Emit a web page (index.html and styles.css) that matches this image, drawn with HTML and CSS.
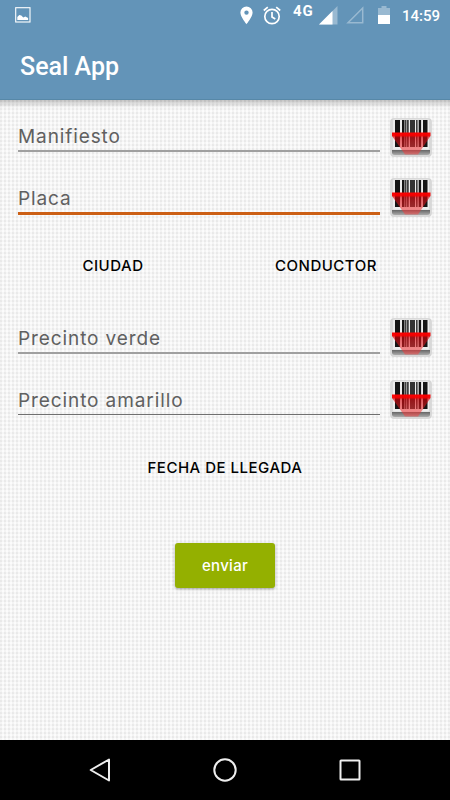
FILE: index.html
```html
<!DOCTYPE html>
<html lang="es">
<head>
    <meta charset="UTF-8">
    <meta name="viewport" content="width=device-width, initial-scale=1.0">
    <title>Seal App</title>
    <link rel="stylesheet" href="styles.css">
</head>
<body>
    <!-- shared barcode scanner icon -->
    <svg class="defs" width="0" height="0">
        <defs>
            <linearGradient id="laser" x1="0" y1="0" x2="0" y2="1">
                <stop offset="0" stop-color="#ff0000"/>
                <stop offset="0.14" stop-color="#f60000" stop-opacity="0.95"/>
                <stop offset="0.24" stop-color="#d80008" stop-opacity="0.6"/>
                <stop offset="1" stop-color="#ff4040" stop-opacity="0.5"/>
            </linearGradient>
            <linearGradient id="base" x1="0" y1="0" x2="0" y2="1">
                <stop offset="0" stop-color="#666"/>
                <stop offset="1" stop-color="#aaa"/>
            </linearGradient>
            <symbol id="scanner" viewBox="0 0 42 39">
                <rect x="0.500" y="0.500" width="41" height="38" rx="3" fill="#d8d8d8" stroke="#d0d0d0" stroke-opacity="0.6"/>
                <rect x="3" y="1.500" width="36" height="30" rx="1" fill="#ededed"/>
                <path d="M2 32h38v2.500q0 2.500-3 2.500H5q-3 0-3-2.500z" fill="url(#base)"/>
                <g fill="#151515">
                    <rect x="5" y="2" width="5" height="27"/>
                    <rect x="12" y="2" width="2.500" height="27"/>
                    <rect x="15.200" y="2" width="1.200" height="27"/>
                    <rect x="17.200" y="2" width="1.400" height="27"/>
                    <rect x="20" y="2" width="5" height="27" fill="#333"/>
                    <rect x="26.200" y="2" width="1.300" height="27"/>
                    <rect x="28.700" y="2" width="2.400" height="27"/>
                    <rect x="33" y="2" width="4.500" height="27"/>
                </g>
                <path d="M2 14.500h38.500V18L28 36.500H15L2 18z" fill="url(#laser)"/>
            </symbol>
        </defs>
    </svg>

    <header class="header">
        <div class="status-bar">
            <svg class="picture-icon" width="16" height="16" viewBox="0 0 16 16">
                <rect x="0.700" y="0.700" width="14.300" height="14.300" fill="none" stroke="#fff" stroke-width="1.100"/>
                <path d="M2.300 13V10l2-2 2 .5 2 2 2-1 2.800 1.500v2z" fill="#fff"/>
            </svg>
            <svg class="pin-icon" width="13" height="19" viewBox="0 0 13 19">
                <path d="M6.500 0.500A6.100 6.100 0 0 0 .4 6.600C.4 11 6.500 18.200 6.500 18.200S12.600 11 12.600 6.600A6.100 6.100 0 0 0 6.500 .5zm0 3.900a2.200 2.200 0 1 1 0 4.400 2.200 2.200 0 0 1 0-4.400z" fill="#fff" fill-rule="evenodd"/>
            </svg>
            <svg class="alarm-icon" width="18" height="19" viewBox="0 0 18 19" fill="none" stroke="#fff" stroke-width="1.700">
                <circle cx="9" cy="10.500" r="7.200"/>
                <path d="M9 6v5l3.300 2M.8 4.500l4-3.400M17.200 4.500l-4-3.400"/>
            </svg>
            <span class="network">4G</span>
            <svg class="signal-icon" width="19" height="19" viewBox="0 0 19 19">
                <path d="M18.500 0v18.500H0z" fill="#fff" fill-opacity="0.35"/>
                <path d="M13.500 5v13.500H0z" fill="#fff"/>
            </svg>
            <svg class="signal-off-icon" width="18" height="18" viewBox="0 0 18 18">
                <path d="M16.700 2v14.800H2z" fill="none" stroke="#fff" stroke-opacity="0.350" stroke-width="1.500"/>
            </svg>
            <svg class="battery-icon" width="12" height="18" viewBox="0 0 12 18">
                <path d="M3.500 0h5v2H12v7H0V2h3.500z" fill="#fff" fill-opacity="0.35"/>
                <path d="M0 9h12v9H0z" fill="#fff"/>
            </svg>
            <span class="clock">14:59</span>
        </div>
        <h1 class="title">Seal App</h1>
    </header>

    <main class="content">
        <div class="row">
            <input class="field manifiesto" type="text" placeholder="Manifiesto">
            <button class="scan" aria-label="Escanear"><svg width="42" height="39"><use href="#scanner"/></svg></button>
        </div>
        <div class="row">
            <input class="field active" type="text" placeholder="Placa">
            <button class="scan" aria-label="Escanear"><svg width="42" height="39"><use href="#scanner"/></svg></button>
        </div>
        <div class="pickers">
            <button class="flat city">CIUDAD</button>
            <button class="flat driver">CONDUCTOR</button>
        </div>
        <div class="row green-seal">
            <input class="field" type="text" placeholder="Precinto verde">
            <button class="scan" aria-label="Escanear"><svg width="42" height="39"><use href="#scanner"/></svg></button>
        </div>
        <div class="row">
            <input class="field yellow" type="text" placeholder="Precinto amarillo">
            <button class="scan" aria-label="Escanear"><svg width="42" height="39"><use href="#scanner"/></svg></button>
        </div>
        <button class="flat">FECHA DE LLEGADA</button>
        <button class="send">enviar</button>
    </main>

    <nav class="nav-bar">
        <svg width="24" height="26" viewBox="0 0 24 26"><path d="M21 2.500v21L2.700 13z" fill="none" stroke="#eee" stroke-width="2" stroke-linejoin="round"/></svg>
        <svg width="24" height="26" viewBox="0 0 24 26"><circle cx="12" cy="13" r="10.700" fill="none" stroke="#eee" stroke-width="2"/></svg>
        <svg width="24" height="26" viewBox="0 0 24 26"><rect x="2.500" y="3.500" width="19" height="19" rx="0.500" fill="none" stroke="#eee" stroke-width="2"/></svg>
    </nav>
</body>
</html>
```
FILE: styles.css
```css
* {
    box-sizing: border-box;
}
body {
    margin: 0;
    height: 800px;
    display: flex;
    flex-direction: column;
    overflow: hidden;
    font-family: Inter, "Open Sans", sans-serif;
}
svg {
    display: block;
    flex: none;
}
.defs {
    position: absolute;
}
button {
    font-family: inherit;
    border: none;
    padding: 0;
    background: none;
    cursor: pointer;
}

/* header */
.header {
    height: 100px;
    flex: none;
    background-color: #6394b8;
    border-bottom: 1px solid #5788a8;
    color: #fff;
    font-family: Roboto, sans-serif;
}
.status-bar {
    height: 30px;
    display: flex;
    align-items: center;
    padding: 0 10px 0 15px;
}
.pin-icon {
    margin-left: auto;
    margin-right: 10px;
}
.alarm-icon {
    margin-right: 12px;
}
.network {
    width: 22px;
    margin-right: 4px;
    padding-bottom: 8px;
    font-size: 15px;
    font-weight: 700;
    letter-spacing: 1px;
    line-height: 16px;
}
.signal-icon {
    margin-right: 8px;
}
.signal-off-icon {
    margin-right: 14px;
}
.battery-icon {
    margin-right: 12px;
}
.clock {
    width: 38px;
    padding-top: 1px;
    font-size: 15px;
    font-weight: 500;
    white-space: nowrap;
}
.title {
    margin: 0;
    padding: 21px 20px 0;
    font-size: 25px;
    line-height: 32px;
    font-weight: 500;
}

/* form */
.content {
    flex: 1;
    display: flex;
    flex-direction: column;
    padding: 18px 18px 0;
    background-color: #f5f5f5;
    background-image:
        linear-gradient(rgba(0, 0, 0, 0.2), rgba(0, 0, 0, 0)),
        repeating-linear-gradient(90deg, rgba(0, 0, 0, 0.022) 0, rgba(0, 0, 0, 0.022) 2px, rgba(255, 255, 255, 0.45) 2px, rgba(255, 255, 255, 0.45) 4px),
        repeating-linear-gradient(rgba(0, 0, 0, 0.022) 0, rgba(0, 0, 0, 0.022) 2px, rgba(255, 255, 255, 0.45) 2px, rgba(255, 255, 255, 0.45) 4px);
    background-size: 100% 8px, auto, auto;
    background-repeat: no-repeat, repeat, repeat;
}
.row {
    display: flex;
    align-items: flex-start;
    gap: 10px;
    height: 39px;
    margin-bottom: 21px;
}
.green-seal {
    margin-bottom: 23px;
}
.field {
    width: 362px;
    height: 36px;
    padding: 6px 0 0;
    border: none;
    border-bottom: 2px solid #a0a0a0;
    outline: none;
    background: none;
    font-family: inherit;
    font-size: 19px;
    letter-spacing: 0.9px;
}
.field::placeholder {
    color: #606060;
    opacity: 1;
}
.manifiesto {
    height: 34px;
    padding-top: 4px;
}
.active {
    height: 37px;
    border-bottom: 3px solid #cc5f14;
}
.yellow {
    height: 35px;
    border-bottom: 1px solid #707070;
}
.pickers {
    display: flex;
    margin-bottom: 25px;
}
.flat {
    flex: none;
    height: 55px;
    font-size: 15px;
    font-weight: 500;
    letter-spacing: 0.5px;
    color: #000;
}
.city {
    width: 190px;
}
.driver {
    flex: 1;
    padding-left: 12px;
}
.send {
    align-self: center;
    width: 100px;
    height: 45px;
    margin-top: 48px;
    border-radius: 3px;
    background-color: #94b000;
    box-shadow: 0 1px 3px rgba(0, 0, 0, 0.35);
    color: #fff;
    font-size: 15px;
    font-weight: 500;
    letter-spacing: 0.3px;
}

/* system navigation */
.nav-bar {
    height: 60px;
    flex: none;
    display: flex;
    align-items: center;
    justify-content: space-between;
    padding: 0 88px;
    background-color: #000;
}
```
